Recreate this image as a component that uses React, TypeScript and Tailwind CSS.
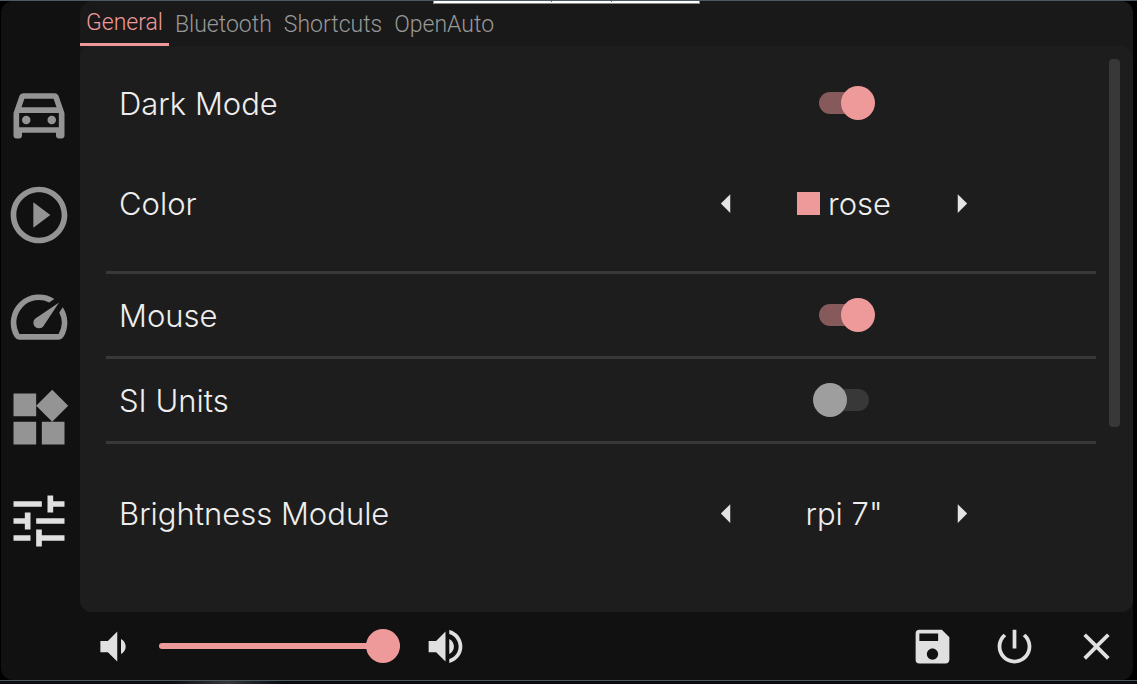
import { useState, type ReactNode } from "react";

const paths = {
  car: "M18.92 6.01C18.72 5.42 18.16 5 17.5 5h-11c-.66 0-1.21.42-1.42 1.01L3 12v8c0 .55.45 1 1 1h1c.55 0 1-.45 1-1v-1h12v1c0 .55.45 1 1 1h1c.55 0 1-.45 1-1v-8l-2.08-5.99zM6.85 7h10.29l1.04 3H5.81l1.04-3zM19 17H5v-5h14v5zM7.5 13a1.5 1.5 0 1 0 0 3 1.5 1.5 0 0 0 0-3zM16.5 13a1.5 1.5 0 1 0 0 3 1.5 1.5 0 0 0 0-3z",
  play: "M10 16.5l6-4.5-6-4.5v9zM12 2C6.48 2 2 6.48 2 12s4.48 10 10 10 10-4.48 10-10S17.52 2 12 2zm0 18c-4.41 0-8-3.59-8-8s3.59-8 8-8 8 3.59 8 8-3.59 8-8 8z",
  speed: "M20.38 8.57l-1.23 1.85a8 8 0 0 1-.22 7.58H5.07A8 8 0 0 1 15.58 6.85l1.85-1.23A10 10 0 0 0 3.35 19a2 2 0 0 0 1.72 1h13.85a2 2 0 0 0 1.74-1 10 10 0 0 0-.27-10.44zM10.59 15.41a2 2 0 0 0 2.83 0l5.66-8.49-8.49 5.66a2 2 0 0 0 0 2.83z",
  widgets: "M13 13v8h8v-8h-8zM3 21h8v-8H3v8zM3 3v8h8V3H3zm13.66-1.31L11 7.34 16.66 13l5.66-5.66-5.66-5.65z",
  tune: "M3 17v2h6v-2H3zM3 5v2h10V5H3zm10 16v-2h8v-2h-8v-2h-2v6h2zM7 9v2H3v2h4v2h2V9H7zm14 4v-2H11v2h10zm-6-4h2V7h4V5h-4V3h-2v6z",
  volumeDown: "M18.5 12c0-1.77-1.02-3.29-2.5-4.03v8.05c1.48-.73 2.5-2.25 2.5-4.02zM5 9v6h4l5 5V4L9 9H5z",
  volumeUp: "M3 9v6h4l5 5V4L7 9H3zm13.5 3c0-1.77-1.02-3.29-2.5-4.03v8.05c1.48-.73 2.5-2.25 2.5-4.02zM14 3.23v2.06c2.89.86 5 3.54 5 6.71s-2.11 5.85-5 6.71v2.06c4.01-.91 7-4.49 7-8.77s-2.99-7.86-7-8.77z",
  save: "M17 3H5a2 2 0 0 0-2 2v14a2 2 0 0 0 2 2h14c1.1 0 2-.9 2-2V7l-4-4zm-5 16c-1.66 0-3-1.34-3-3s1.34-3 3-3 3 1.34 3 3-1.34 3-3 3zm3-10H5V5h10v4z",
  power: "M13 3h-2v10h2V3zm4.83 2.17l-1.42 1.42C17.99 7.86 19 9.81 19 12c0 3.87-3.13 7-7 7s-7-3.13-7-7c0-2.19 1.01-4.14 2.58-5.42L6.17 5.17C4.23 6.82 3 9.26 3 12c0 4.97 4.03 9 9 9s9-4.03 9-9c0-2.74-1.23-5.18-3.17-6.83z",
  close: "M19 6.41L17.59 5 12 10.59 6.41 5 5 6.41 10.59 12 5 17.59 6.41 19 12 13.41 17.59 19 19 17.59 13.41 12z",
  left: "M14 7l-5 5 5 5V7z",
  right: "M10 17l5-5-5-5v10z",
};

type IconName = keyof typeof paths;

function IconButton({ icon, label, className, size, onClick }: { icon: IconName; label: string; className: string; size: string; onClick?: () => void }) {
  return (
    <button type="button" aria-label={label} onClick={onClick} className={className}>
      <svg viewBox="0 0 24 24" className={size} fill="currentColor" aria-hidden="true">
        <path d={paths[icon]} />
      </svg>
    </button>
  );
}

function Row({ title, tall, children }: { title: string; tall?: boolean; children: ReactNode }) {
  return (
    <div className={`grid grid-cols-2 items-center gap-2 px-[13px] ${tall ? "min-h-[118px]" : "min-h-[82px]"}`}>
      <span className="pt-[2px]">{title}</span>
      <div className="flex justify-center">{children}</div>
    </div>
  );
}

function Switch({ label, initial }: { label: string; initial: boolean }) {
  const [on, setOn] = useState(initial);
  return (
    <label className="relative flex h-[34px] w-[62px] items-center px-[6px]">
      <input type="checkbox" role="switch" aria-label={label} checked={on} onChange={() => setOn(!on)} className="peer sr-only" />
      <span className="h-[22px] flex-1 rounded-full bg-[#383838] peer-checked:bg-[#865a5a]" />
      <span className="absolute left-0 size-[34px] rounded-full bg-[#9e9e9e] peer-checked:right-0 peer-checked:left-auto peer-checked:bg-[#ef9a9a]" />
    </label>
  );
}

function Picker({ name, children }: { name: string; children: ReactNode }) {
  return (
    <div className="flex w-[280px] items-center justify-between">
      <IconButton icon="left" label={`Previous ${name}`} className="text-[#e4e4e4]" size="size-[45px]" />
      <span className="flex items-center gap-2">{children}</span>
      <IconButton icon="right" label={`Next ${name}`} className="text-[#e4e4e4]" size="size-[45px]" />
    </div>
  );
}

function Divider() {
  return <hr className="h-[3px] border-0 bg-[#383838]" />;
}

const nav: { icon: IconName; label: string }[] = [
  { icon: "car", label: "Vehicle" },
  { icon: "play", label: "Media" },
  { icon: "speed", label: "Dashboard" },
  { icon: "widgets", label: "Launcher" },
  { icon: "tune", label: "Settings" },
];

const tabs = ["General", "Bluetooth", "Shortcuts", "OpenAuto"];

export default function App() {
  const [page, setPage] = useState("Settings");
  const [tab, setTab] = useState("General");
  const [volume, setVolume] = useState(100);

  return (
    <div className="relative flex min-h-screen flex-col border-t border-[#4b5960] bg-black pl-px font-['Inter','Noto_Sans',sans-serif] text-[31px] leading-9 font-light text-[#eeeeee]">
      <div className="absolute top-0 left-[38.1%] flex h-[3px] w-[23.5%] border-x border-b border-[#8a8a8a] bg-white">
        <span className="ml-[117px] h-px w-px bg-[#777]" />
        <span className="ml-[59px] h-px w-px bg-[#777]" />
      </div>

      <div className="mr-1 flex flex-1 flex-col rounded-xl bg-[#111111]">
        <div className="flex flex-1">
          <nav className="flex w-[79px] shrink-0 flex-col items-start gap-[34px] pt-[78px] pl-1">
            {nav.map((n) => (
              <IconButton
                key={n.label}
                icon={n.icon}
                label={n.label}
                size="size-[68px]"
                className={n.label === page ? "text-[#e0e0e0]" : "text-[#949494]"}
                onClick={() => setPage(n.label)}
              />
            ))}
          </nav>

          <section className="flex min-w-0 flex-1 flex-col rounded-xl bg-[#191919]">
            <div role="tablist" className="flex h-[45px] font-['Roboto',sans-serif] text-[23px] leading-10 font-light">
              {tabs.map((t) => (
                <button
                  key={t}
                  type="button"
                  role="tab"
                  aria-selected={t === tab}
                  onClick={() => setTab(t)}
                  className={t === tab ? "border-b-[3px] border-[#ef9a9a] px-[6px] pt-[2px] text-[#ef9a9a]" : "px-[6px] pt-[2px] text-[#989898]"}
                >
                  {t}
                </button>
              ))}
            </div>

            <div className="flex flex-1 items-start rounded-xl bg-[#1d1d1d] pr-[13px] pl-[26px]">
              <div className="flex-1 pt-4">
                <Row title="Dark Mode">
                  <Switch label="Dark Mode" initial />
                </Row>
                <Row title="Color" tall>
                  <Picker name="color">
                    <span className="size-[23px] bg-[#ef9a9a]" />
                    <span className="pt-[2px]">rose</span>
                  </Picker>
                </Row>
                <div className="pt-[9px]">
                  <Divider />
                </div>
                <Row title="Mouse">
                  <Switch label="Mouse" initial />
                </Row>
                <Divider />
                <Row title="SI Units">
                  <Switch label="SI Units" initial={false} />
                </Row>
                <Divider />
                <div className="pt-[10px]">
                  <Row title="Brightness Module" tall>
                    <Picker name="brightness module">
                      <span className="pt-[2px]">rpi 7"</span>
                    </Picker>
                  </Row>
                </div>
              </div>
              <div className="mt-[13px] ml-[13px] h-[368px] w-[11px] rounded-[4px] bg-[#383838]" />
            </div>
          </section>
        </div>

        <footer className="flex h-[68px] items-center pr-[14px] pl-[90px] text-[#e0e0e0]">
          <IconButton icon="volumeDown" label="Volume down" className="" size="size-[45px]" onClick={() => setVolume(Math.max(0, volume - 10))} />
          <input
            type="range"
            min={0}
            max={100}
            value={volume}
            aria-label="Volume"
            onChange={(e) => setVolume(Number(e.target.value))}
            className="mr-[23px] ml-[23px] h-[34px] w-[241px] appearance-none bg-transparent [&::-webkit-slider-runnable-track]:h-[6px] [&::-webkit-slider-runnable-track]:rounded-full [&::-webkit-slider-runnable-track]:bg-[#ef9a9a] [&::-webkit-slider-thumb]:-mt-[14px] [&::-webkit-slider-thumb]:size-[34px] [&::-webkit-slider-thumb]:appearance-none [&::-webkit-slider-thumb]:rounded-full [&::-webkit-slider-thumb]:bg-[#ef9a9a]"
          />
          <IconButton icon="volumeUp" label="Volume up" className="" size="size-[45px]" onClick={() => setVolume(Math.min(100, volume + 10))} />
          <div className="ml-auto flex gap-[37px]">
            <IconButton icon="save" label="Save" className="" size="size-[45px]" />
            <IconButton icon="power" label="Power" className="" size="size-[45px]" />
            <IconButton icon="close" label="Close" className="" size="size-[45px]" />
          </div>
        </footer>
      </div>
      <div className="-ml-px h-1 border-t border-[#4b5960] bg-linear-to-r from-[#0b0d10] from-15% via-[#34363a] via-20% to-[#080a0e] to-25%" />
    </div>
  );
}
